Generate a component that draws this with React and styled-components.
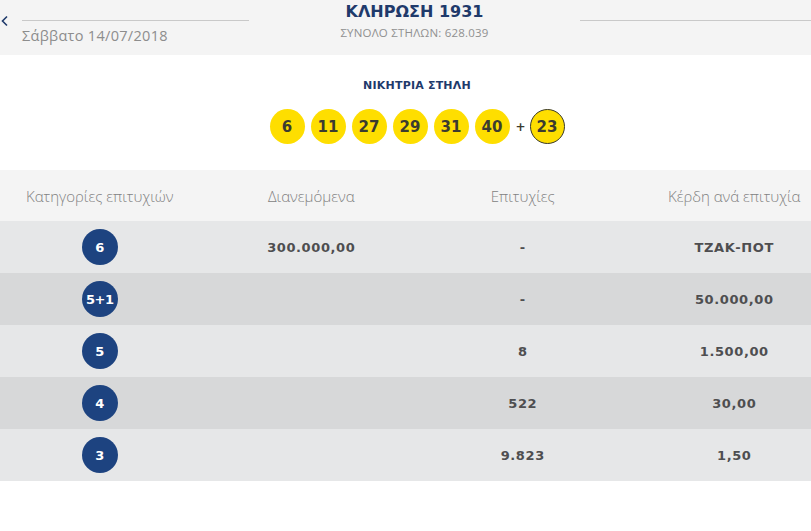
import React from "react";
import styled, { createGlobalStyle } from "styled-components";

const GlobalStyle = createGlobalStyle`
  body {
    margin: 0;
    background: #ffffff;
    overflow: hidden;
    font-family: "Open Sans", "DejaVu Sans", sans-serif;
  }
`;

const Page = styled.div`
  width: 846px;
  margin-left: -6px;
`;

const TopBar = styled.div`
  height: 55px;
  background: #f4f4f4;
  display: grid;
  grid-template-columns: 255px 1fr 260px;
`;

const LeftSide = styled.div`
  display: flex;
  align-items: flex-start;
  padding-left: 6px;
`;

const Back = styled.div`
  width: 22px;
  padding-top: 15px;
  box-sizing: border-box;
`;

const ChevronSvg = styled.svg`
  display: block;
`;

const DateBlock = styled.div`
  flex: 1;
  padding-top: 20px;
`;

const Rule = styled.div`
  height: 1px;
  background: #c9c9c9;
`;

const DateText = styled.div`
  margin-top: 5px;
  font-size: 14.5px;
  color: #8d8d8d;
  letter-spacing: 0.3px;
`;

const Center = styled.div`
  display: flex;
  flex-direction: column;
  align-items: center;
  padding-top: 1px;
`;

const Title = styled.div`
  font-family: "DejaVu Sans", sans-serif;
  font-weight: bold;
  font-size: 16px;
  line-height: 22px;
  color: #1f3a6b;
`;

const Subtitle = styled.div`
  font-size: 11.5px;
  line-height: 16px;
  color: #909090;
  margin-top: 2px;
  letter-spacing: 0.2px;
`;

const RightSide = styled.div`
  padding-top: 20px;
`;

const Winning = styled.div`
  height: 115px;
  display: flex;
  flex-direction: column;
  align-items: center;
  padding-top: 24px;
  box-sizing: border-box;
`;

const WinTitle = styled.div`
  font-family: "DejaVu Sans", sans-serif;
  font-weight: bold;
  font-size: 11px;
  line-height: 14px;
  color: #1f3a6b;
  letter-spacing: 0.2px;
`;

const Balls = styled.div`
  display: flex;
  align-items: center;
  gap: 6px;
  margin-top: 16px;
`;

const Ball = styled.div`
  width: 35px;
  height: 35px;
  box-sizing: border-box;
  border-radius: 50%;
  background: #fede00;
  border: ${(p) => (p.$bonus ? "1px solid #3a3a2a" : "none")};
  display: flex;
  align-items: center;
  justify-content: center;
  font-family: "DejaVu Sans", sans-serif;
  font-weight: bold;
  font-size: 15px;
  color: #3b3b30;
`;

const Plus = styled.span`
  font-family: "DejaVu Sans", sans-serif;
  font-weight: bold;
  font-size: 12px;
  color: #3b3b30;
  width: 8px;
  text-align: center;
`;

const Row = styled.div`
  display: grid;
  grid-template-columns: repeat(4, 1fr);
  align-items: center;
  height: ${(p) => (p.$head ? "51px" : "52px")};
  background: ${(p) =>
    p.$head ? "#f4f4f4" : p.$dark ? "#d7d8d9" : "#e6e7e8"};
`;

const HeadCell = styled.div`
  text-align: center;
  font-size: 15px;
  font-weight: 300;
  color: #828282;
`;

const Cell = styled.div`
  text-align: center;
  font-family: "DejaVu Sans", sans-serif;
  font-weight: bold;
  font-size: 13px;
  letter-spacing: 0.6px;
  color: #4e4e50;
  display: flex;
  justify-content: center;
`;

const Badge = styled.div`
  width: 36px;
  height: 36px;
  border-radius: 50%;
  background: #1d4380;
  color: #ffffff;
  display: flex;
  align-items: center;
  justify-content: center;
  font-family: "DejaVu Sans", sans-serif;
  font-weight: bold;
  font-size: 13px;
  letter-spacing: ${(p) => (p.$tight ? "-0.5px" : "0")};
`;

const numbers = ["6", "11", "27", "29", "31", "40"];

const rows = [
  { cat: "6", pool: "300.000,00", wins: "-", prize: "ΤΖΑΚ-ΠΟΤ" },
  { cat: "5+1", pool: "", wins: "-", prize: "50.000,00" },
  { cat: "5", pool: "", wins: "8", prize: "1.500,00" },
  { cat: "4", pool: "", wins: "522", prize: "30,00" },
  { cat: "3", pool: "", wins: "9.823", prize: "1,50" },
];

function Chevron() {
  return (
    <ChevronSvg width="10" height="12" viewBox="0 0 10 12">
      <polyline
        points="7,1.5 2.5,6 7,10.5"
        fill="none"
        stroke="#1f3a6b"
        strokeWidth="1.6"
      />
    </ChevronSvg>
  );
}

export default function App() {
  return (
    <Page>
      <GlobalStyle />
      <TopBar>
        <LeftSide>
          <Back>
            <Chevron />
          </Back>
          <DateBlock>
            <Rule />
            <DateText>Σάββατο 14/07/2018</DateText>
          </DateBlock>
        </LeftSide>
        <Center>
          <Title>ΚΛΗΡΩΣΗ 1931</Title>
          <Subtitle>ΣΥΝΟΛΟ ΣΤΗΛΩΝ: 628.039</Subtitle>
        </Center>
        <RightSide>
          <Rule />
        </RightSide>
      </TopBar>

      <Winning>
        <WinTitle>ΝΙΚΗΤΡΙΑ ΣΤΗΛΗ</WinTitle>
        <Balls>
          {numbers.map((n) => (
            <Ball key={n}>{n}</Ball>
          ))}
          <Plus>+</Plus>
          <Ball $bonus>23</Ball>
        </Balls>
      </Winning>

      <div>
        <Row $head>
          <HeadCell>Κατηγορίες επιτυχιών</HeadCell>
          <HeadCell>Διανεμόμενα</HeadCell>
          <HeadCell>Επιτυχίες</HeadCell>
          <HeadCell>Κέρδη ανά επιτυχία</HeadCell>
        </Row>
        {rows.map((r, i) => (
          <Row key={r.cat} $dark={i % 2 === 1}>
            <Cell>
              <Badge $tight={r.cat.length > 1}>{r.cat}</Badge>
            </Cell>
            <Cell>{r.pool}</Cell>
            <Cell>{r.wins}</Cell>
            <Cell>{r.prize}</Cell>
          </Row>
        ))}
      </div>
    </Page>
  );
}
